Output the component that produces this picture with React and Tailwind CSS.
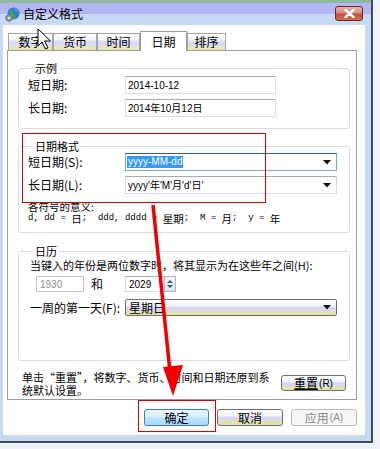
import React from 'react';

const cjk = "font-['Noto_Sans_CJK_SC',sans-serif]";
const latin = "font-['Liberation_Sans','Noto_Sans_CJK_SC',sans-serif]";
const mono = "font-['Liberation_Mono','Noto_Sans_CJK_SC',monospace]";

const tabFill =
  'bg-[linear-gradient(to_bottom,#ffffff_0%,#f4f4f4_35%,#d9d9f8_50%,#d9d9f8_78%,#e6e6b8_78%,#e6e6b8_100%)]';
const btnFill =
  'bg-[linear-gradient(to_bottom,#ffffff_0%,#f3f3f3_40%,#d6d6f6_50%,#d6d6f6_70%,#e2e2b0_70%,#e2e2b0_100%)]';

const DropArrow = () => (
  <svg width="8" height="5" viewBox="0 0 8 5" className="shrink-0">
    <path d="M0 0h8L4 4.5z" fill="#111" />
  </svg>
);

const Tab = ({ label, active, w }) =>
  active ? (
    <div
      className={`${w} h-[20px] -mb-px relative z-10 bg-white border border-b-0 border-[#9a9aa8] flex items-center justify-center text-[12px] text-black`}
    >
      {label}
    </div>
  ) : (
    <div
      className={`${w} h-[17px] ${tabFill} border border-b-0 border-[#a4a4b0] flex items-center justify-center text-[12px] text-black`}
    >
      {label}
    </div>
  );

const Group = ({ title, className, children }) => (
  <div className={`border border-[#d6daf0] rounded-[3px] px-[9px] ${className}`}>
    <div className="-mt-[7px] mb-px ml-[5px] px-[2px] bg-white w-fit text-[11px] leading-[12px] text-black">{title}</div>
    {children}
  </div>
);

const Button = ({ children, variant }) => {
  if (variant === 'default')
    return (
      <div className="w-[65px] h-[17px] rounded-[3px] border border-[#3c7fb1] bg-[linear-gradient(to_bottom,#eaf6fd_0%,#d9f0fc_45%,#bee6fd_50%,#a7d9f5_100%)] flex items-center justify-center text-[12px] text-black">
        {children}
      </div>
    );
  if (variant === 'disabled')
    return (
      <div className="w-[66px] h-[17px] rounded-[3px] border border-[#b8bcc0] bg-[#f6f6f6] flex items-center justify-center text-[12px] text-[#8a8a8a]">
        {children}
      </div>
    );
  return (
    <div className={`w-[66px] h-[17px] rounded-[3px] border border-[#707070] ${btnFill} flex items-center justify-center text-[12px] text-black`}>
      {children}
    </div>
  );
};

export default function App() {
  return (
    <div className={`w-[380px] h-[449px] bg-[#eef2f8] overflow-hidden relative ${cjk}`}>
      <div className="w-[373px] h-[443px] border-r-2 border-b-2 border-[#3e4a58] bg-[#c6d9f3] flex flex-col">
        {/* title bar */}
        <div className="h-[25px] shrink-0 bg-[linear-gradient(to_bottom,#8fb99f_0px,#8fb99f_3px,#b3b6f2_3px,#b3b6f2_14px,#c6d9f5_14px,#c6d9f5_25px)] flex items-center pl-[5px] pr-[8px]">
          <svg width="15" height="15" viewBox="0 0 15 15" className="shrink-0 mt-[3px]">
            <circle cx="8.5" cy="6.5" r="6" fill="#2f7fd8" />
            <path d="M5 3c2 0 3 1 3 3s2 1 3 3c-1 2-3 3-5 2 0-2-2-2-1-4z" fill="#3cae3c" />
            <path d="M9 1.5c1.5.5 3 1.5 3.5 3-1 0-2-1-3.5-3z" fill="#8fd48f" />
            <circle cx="4" cy="11" r="3.3" fill="#9a9a9a" stroke="#666" strokeWidth="0.8" />
            <circle cx="4" cy="11" r="1.1" fill="#eee" />
          </svg>
          <span className="ml-[3px] mt-[2px] text-[12px] leading-none text-black">自定义格式</span>
          <div className="ml-auto w-[28px] h-[15px] mt-[2px] rounded-[3px] border border-[#5a2a2a] bg-[linear-gradient(to_bottom,#eab4a8_0%,#d88a78_45%,#c9503a_55%,#d96a4a_100%)] flex items-center justify-center">
            <svg width="11" height="9" viewBox="0 0 11 9">
              <path d="M1.5 1l8 7M9.5 1l-8 7" stroke="#fff" strokeWidth="2.4" strokeLinecap="round" />
            </svg>
          </div>
        </div>

        {/* client area */}
        <div className="ml-[3px] w-[362px] h-[410px] bg-white flex flex-col pl-[4px] pr-[8px] pt-[6px]">
          <div className="h-[19px] flex items-end pl-[1px]">
            <Tab label="数字" w="w-[45px]" />
            <Tab label="货币" w="w-[44px]" />
            <Tab label="时间" w="w-[43px]" />
            <Tab label="日期" w="w-[47px]" active />
            <Tab label="排序" w="w-[39px]" />
          </div>

          <div className="h-[350px] border border-[#9a9aa8] bg-white pl-[10px] pr-[6px] flex flex-col">
            <Group title="示例" className="mt-[17px] pb-[11px]">
              <div className="mt-[2px] flex flex-col gap-[5px]">
                {[
                  ['短日期:', '2014-10-12'],
                  ['长日期:', '2014年10月12日'],
                ].map(([l, v]) => (
                  <div key={l} className="flex items-center h-[18px]">
                    <span className="w-[97px] text-[12px] text-black">{l}</span>
                    <div className={`w-[151px] h-[18px] border border-[#dcdcf0] border-t-[#a8a8b0] flex items-center px-[2px] text-[10px] text-black ${latin}`}>
                      {v}
                    </div>
                  </div>
                ))}
              </div>
            </Group>

            <Group title="日期格式" className="mt-[17px] pb-[8px]">
              <div className="mt-px flex flex-col gap-[5px]">
                <div className="flex items-center h-[18px]">
                  <span className="w-[97px] text-[12px] text-black">短日期(S):</span>
                  <div className="w-[212px] h-[18px] border border-[#7ea6cf] border-t-[#2c5d8f] flex items-center pl-px pr-[5px]">
                    <span className={`bg-[#3399ff] text-white text-[10px] leading-[12px] px-px ${latin}`}>yyyy-MM-dd</span>
                    <span className="ml-auto"><DropArrow /></span>
                  </div>
                </div>
                <div className="flex items-center h-[18px]">
                  <span className="w-[97px] text-[12px] text-black">长日期(L):</span>
                  <div className="w-[212px] h-[18px] border border-[#d6d6ee] border-t-[#a9a9b4] flex items-center pl-[2px] pr-[5px]">
                    <span className={`text-black text-[10px] ${latin}`}>yyyy'年'M'月'd'日'</span>
                    <span className="ml-auto"><DropArrow /></span>
                  </div>
                </div>
              </div>
              <div className="mt-[7px] text-[10.5px] leading-[12px] text-black">各符号的意义:</div>
              <div className={`h-[11px] flex items-center text-[9px] leading-[11px] text-black whitespace-pre ${mono}`}>
                d, dd = <span className={`text-[10.5px] ${cjk}`}>日</span>;  ddd, dddd = <span className={`text-[10.5px] ${cjk}`}>星期</span>;  M = <span className={`text-[10.5px] ${cjk}`}>月</span>;  y = <span className={`text-[10.5px] ${cjk}`}>年</span>
              </div>
            </Group>

            <Group title="日历" className="mt-[18px] pb-[44px]">
              <div className="mt-[2px] pl-[2px] text-[11px] leading-[13px] text-black whitespace-nowrap">
                当键入的年份是两位数字时，将其显示为在这些年之间(H):
              </div>
              <div className="mt-[4px] flex items-center h-[16px]">
                <div className={`ml-[8px] w-[48px] h-[16px] border border-[#c4c4cc] flex items-center px-[3px] text-[10px] text-[#8c8c8c] ${latin}`}>
                  1930
                </div>
                <span className="ml-[7px] w-[34px] text-[12px] text-black">和</span>
                <div className={`w-[39px] h-[16px] border border-[#d6d6ee] border-t-[#a9a9b4] flex items-center px-[3px] text-[10px] text-black ${latin}`}>
                  2029
                </div>
                <div className="w-[12px] h-[16px] border border-[#b0b4c8] bg-[linear-gradient(to_bottom,#f8f8fc,#d8e4f4)] flex flex-col items-center justify-center gap-[2px]">
                  <svg width="6" height="3" viewBox="0 0 6 3"><path d="M0 3h6L3 0z" fill="#3a5a8a" /></svg>
                  <svg width="6" height="3" viewBox="0 0 6 3"><path d="M0 0h6L3 3z" fill="#3a5a8a" /></svg>
                </div>
              </div>
              <div className="mt-[7px] flex items-center h-[17px]">
                <span className="w-[97px] pl-[2px] text-[12px] text-black">一周的第一天(F):</span>
                <div className={`w-[212px] h-[17px] rounded-[2px] border border-[#707070] ${btnFill} flex items-center pl-[3px] pr-[5px]`}>
                  <span className="text-[12px] text-black">星期日</span>
                  <span className="ml-auto"><DropArrow /></span>
                </div>
              </div>
            </Group>

            <div className="mt-[10px] flex items-start">
              <div className="ml-[4px] w-[255px] text-[11px] leading-[13px] text-black whitespace-nowrap">
                单击“重置”，将数字、货币、时间和日期还原到系
                <br />
                统默认设置。
              </div>
              <div className={`mt-[4px] ml-auto mr-[4px] w-[65px] h-[16px] rounded-[3px] border border-[#707070] ${btnFill} flex items-center justify-center text-[12px] text-black`}>
                <span className="underline">重置</span>
                <span className={`text-[10px] ml-px ${latin}`}>(R)</span>
              </div>
            </div>
          </div>

          <div className="mt-[9px] flex justify-end gap-[8px]">
            <Button variant="default">确定</Button>
            <Button>取消</Button>
            <Button variant="disabled">
              应用<span className={`text-[10px] ml-px ${latin}`}>(A)</span>
            </Button>
          </div>
        </div>
      </div>

      {/* annotations drawn over the screenshot */}
      <div className="absolute left-[22px] top-[133px] w-[244px] h-[70px] border-[1.5px] border-[#e00000] pointer-events-none" />
      <div className="absolute left-[138px] top-[400px] w-[78px] h-[32px] border-[1.5px] border-[#e00000] pointer-events-none" />
      <svg className="absolute left-0 top-0 pointer-events-none" width="380" height="449" viewBox="0 0 380 449">
        <path d="M153 205L170 372" stroke="#f00000" strokeWidth="3.5" />
        <path d="M163 367L183 365L173 396z" fill="#f00000" />
        <path
          d="M38 29v17l4-4 3.5 7 2.5-1.2-3.5-6.8h6z"
          fill="#fff"
          stroke="#000"
          strokeWidth="1"
          strokeLinejoin="round"
        />
      </svg>
    </div>
  );
}
